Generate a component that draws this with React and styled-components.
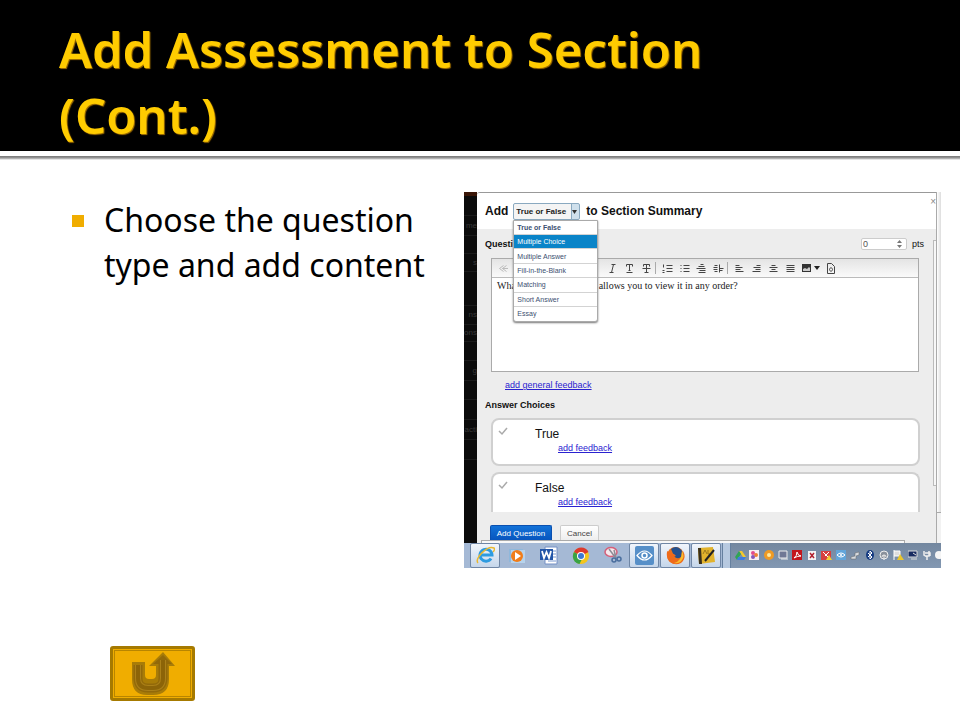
import { useState } from "react";
import styled, { createGlobalStyle, css } from "styled-components";

const GlobalStyle = createGlobalStyle`
  * {
    box-sizing: border-box;
  }
  body {
    margin: 0;
    background: #fff;
    font-family: "Liberation Sans", Arial, sans-serif;
  }
  button,
  input,
  select,
  textarea {
    font-family: inherit;
    margin: 0;
  }
  svg {
    display: block;
    flex: none;
  }
`;

const Slide = styled.div`
  min-height: 100vh;
  display: flex;
  flex-direction: column;
`;

const SlideHeader = styled.header`
  background: #000;
  padding: 16px 59px 3px;
  h1 {
    margin: 0;
    max-width: 700px;
    color: #ffcc00;
    font-family: "Noto Sans", sans-serif;
    font-size: 49px;
    font-weight: 600;
    line-height: 66px;
    text-shadow: 1px 1px 1px #a87400;
  }
`;

const HeaderRule = styled.div`
  height: 4px;
  margin-top: 5px;
  background: linear-gradient(#777, #999 50%, #fff);
`;

const SlideMain = styled.main`
  flex: 1;
  display: grid;
  grid-template-columns: 392fr 477fr;
  align-items: start;
  padding: 32px 19px 24px 72px;
`;

const BulletList = styled.ul`
  margin: 0;
  padding: 5px 20px 0 0;
  list-style: none;
  font-family: "Noto Sans", sans-serif;
  font-size: 32px;
  line-height: 45px;
  li {
    display: grid;
    grid-template-columns: 12px 1fr;
    gap: 20px;
  }
  li::before {
    content: "";
    height: 12px;
    margin-top: 18px;
    background: #f0ad00;
  }
`;

const SlideFooter = styled.footer`
  padding: 0 110px 19px;
`;

const ReturnButton = styled.button`
  display: flex;
  align-items: center;
  justify-content: center;
  width: 85px;
  height: 55px;
  padding: 0;
  background: #f0ad00;
  border: 3px solid #a67a00;
  border-radius: 3px;
  box-shadow: inset 0 0 0 1px #f0ad00, inset 0 0 0 2px #b88500;
`;

const Capture = styled.figure`
  margin: 0;
  min-width: 0;
  overflow: hidden;
`;

const AppWindow = styled.div`
  display: grid;
  grid-template-columns: 13px minmax(0, 1fr) 5px;
`;

const SideNav = styled.nav`
  background: #0b0b0b;
  border-top: 4px solid #3a1607;
  overflow: hidden;
`;

const SideItem = styled.div`
  height: ${({ $height }) => $height}px;
  border-bottom: 1px solid #1b1b1b;
  color: #383838;
  font-size: 8px;
  line-height: ${({ $height }) => $height - 1}px;
  display: flex;
  justify-content: flex-end;
`;

const Dialog = styled.section`
  background: #ededed;
  border-top: 1px solid #999;
  border-radius: 3px 0 0 0;
`;

const DialogHeader = styled.div`
  display: flex;
  align-items: center;
  height: 36px;
  padding-left: 8px;
  background: #fff;
  border-radius: 3px 0 0 0;
  font-size: 12px;
  font-weight: bold;
  color: #111;
`;

const TypePicker = styled.div`
  position: relative;
  width: 67px;
  margin: 0 6px 0 5px;
  select {
    display: block;
    width: 100%;
    height: 17px;
    padding: 0 2px;
    appearance: none;
    background: linear-gradient(90deg, #f4f4f4 57px, #8aa9c0 57px 58px, #cfe0ec 58px);
    border: 1px solid #8aa9c0;
    border-radius: 2px;
    color: #222;
    font-size: 8px;
    font-weight: bold;
  }
  > svg {
    position: absolute;
    right: 3px;
    top: 7px;
    pointer-events: none;
  }
`;

const TypeMenu = styled.ul`
  position: absolute;
  z-index: 2;
  top: 17px;
  left: 0;
  width: 85px;
  height: 102px;
  margin: 0;
  padding: 0;
  display: flex;
  flex-direction: column;
  list-style: none;
  background: #fff;
  border: 1px solid #aaa;
  border-radius: 0 0 3px 3px;
  box-shadow: 0 1px 2px #777;
  li {
    flex: 1;
    display: flex;
    border-bottom: 1px solid #d3d3d3;
  }
  li:last-child {
    border-bottom: 0;
  }
`;

const TypeOption = styled.button`
  flex: 1;
  padding: 0 3px;
  border: 0;
  background: ${({ $active }) => ($active ? "#0a84c8" : "transparent")};
  color: ${({ $active }) => ($active ? "#fff" : "#3c4f70")};
  font-size: 7px;
  font-weight: ${({ $bold }) => ($bold ? "bold" : "normal")};
  text-align: left;
`;

const CloseButton = styled.button`
  align-self: flex-start;
  margin: 4px 0 0 auto;
  padding: 0;
  border: 0;
  background: none;
  color: #888;
  font-size: 10px;
  line-height: 10px;
`;

const DialogBody = styled.div`
  display: grid;
  grid-template-columns: minmax(0, 1fr) 3px;
`;

const QuestionForm = styled.form`
  padding-left: 8px;
`;

const QuestionRow = styled.div`
  display: flex;
  align-items: center;
  height: 29px;
  font-size: 9px;
  color: #111;
  > label {
    font-weight: bold;
  }
`;

const Points = styled.div`
  display: flex;
  align-items: center;
  gap: 5px;
  margin: 0 9px 0 auto;
`;

const PointsField = styled.div`
  display: flex;
  align-items: center;
  width: 46px;
  height: 12px;
  padding-right: 4px;
  background: #fff;
  border: 1px solid #ccc;
  border-radius: 2px;
  input {
    flex: 1;
    min-width: 0;
    padding: 0 1px;
    border: 0;
    background: none;
    color: #555;
    font-size: 9px;
    line-height: 10px;
    appearance: textfield;
  }
  input::-webkit-inner-spin-button {
    display: none;
  }
`;

const Editor = styled.div`
  margin: 0 14px 0 6px;
  border: 1px solid #aaa;
  background: #fff;
  textarea {
    display: block;
    width: 100%;
    height: 93px;
    padding: 2px 5px;
    border: 0;
    resize: none;
    color: #222;
    font-family: "Liberation Serif", "Times New Roman", serif;
    font-size: 10px;
    line-height: 12px;
  }
`;

const Toolbar = styled.div`
  display: flex;
  align-items: center;
  height: 19px;
  padding-left: 2px;
  background: linear-gradient(#e4e4e4, #fafafa);
  border-bottom: 1px solid #bbb;
`;

const Tool = styled.button`
  display: flex;
  align-items: center;
  justify-content: center;
  width: ${({ $wide }) => ($wide ? 23 : 17)}px;
  height: 16px;
  padding: 0;
  border: 0;
  background: none;
  color: ${({ $faded }) => ($faded ? "#bbb" : "#444")};
`;

const ToolGap = styled.span`
  width: 4px;
  height: 12px;
  border-left: 1px solid ${({ $line }) => ($line ? "#aaa" : "transparent")};
`;

const FeedbackLink = styled.a`
  color: #2a22d0;
  font-size: 9px;
  line-height: 12px;
`;

const GeneralFeedback = styled.div`
  display: flex;
  height: 26px;
  padding: 7px 0 0 20px;
`;

const AnswerHeading = styled.h2`
  margin: 0 0 6px;
  color: #111;
  font-size: 9px;
  line-height: 14px;
`;

const AnswerCard = styled.div`
  display: grid;
  grid-template-columns: 37px 1fr;
  height: 48px;
  margin: 0 13px 6px 6px;
  padding: 7px 5px;
  background: #fff;
  border: 2px solid #d0d0d0;
  border-radius: 8px;
  ${({ $clipped }) =>
    $clipped &&
    css`
      height: 40px;
      margin-bottom: 0;
      border-bottom: 0;
      border-radius: 8px 8px 0 0;
    `}
  p {
    margin: 0 0 1px;
    color: #111;
    font-size: 12px;
    line-height: 14px;
  }
  a {
    display: block;
    margin-left: 23px;
  }
`;

const InnerScroll = styled.div`
  height: 246px;
  margin-top: 11px;
  border: solid #bbb;
  border-width: 1px 0 1px 1px;
  background: #f7f7f7;
`;

const OuterScroll = styled.div`
  border-left: 1px solid #aaa;
  background: linear-gradient(90deg, #fff, #ddd);
  display: flex;
  flex-direction: column;
  justify-content: flex-end;
  &::after {
    content: "";
    height: 30px;
    border-top: 1px solid #aaa;
    background: #f2f2f2;
  }
`;

const DialogFooter = styled.div`
  display: flex;
  align-items: flex-end;
  gap: 8px;
  height: 28px;
  padding-left: 13px;
`;

const FooterButton = styled.button`
  width: ${({ $primary }) => ($primary ? 62 : 39)}px;
  height: 15px;
  padding: 0;
  border: 1px solid ${({ $primary }) => ($primary ? "#0a50b0" : "#ccc")};
  border-bottom: 0;
  border-radius: 2px 2px 0 0;
  background: ${({ $primary }) =>
    $primary ? "linear-gradient(#1272d8, #0755be)" : "linear-gradient(#fff, #eee)"};
  color: ${({ $primary }) => ($primary ? "#fff" : "#444")};
  font-size: 8px;
`;

const BottomScroll = styled.div`
  height: 3px;
  margin: 0 31px 0 4px;
  background: #f8f8f8;
  border: 1px solid #aaa;
  border-bottom: 0;
`;

const Taskbar = styled.div`
  display: flex;
  height: 25px;
  padding-left: 6px;
  background: #a5b9d5;
`;

const TaskButton = styled.button`
  display: flex;
  align-items: center;
  justify-content: center;
  width: ${({ $open }) => ($open ? 30 : 32)}px;
  margin-right: ${({ $open }) => ($open ? 1 : 0)}px;
  padding: 0;
  border: 1px solid ${({ $open }) => ($open ? "#6f86a5" : "transparent")};
  border-radius: 2px;
  background: ${({ $open }) => ($open ? "linear-gradient(#f1f5fb, #c5d6ea)" : "none")};
`;

const Tray = styled.div`
  flex: 1;
  display: grid;
  grid-template-columns: 9px 2px repeat(14, minmax(0, 1fr)) 6px;
  align-items: center;
  justify-items: center;
  overflow: hidden;
  background: linear-gradient(#73879f, #8398b2);
`;

const TrayHandle = styled.div`
  grid-column: 1 / 2;
  align-self: stretch;
  justify-self: stretch;
  background: #b7c9e0;
  border: solid #66809f;
  border-width: 0 1px;
`;

const questionTypes = [
  "True or False",
  "Multiple Choice",
  "Multiple Answer",
  "Fill-in-the-Blank",
  "Matching",
  "Short Answer",
  "Essay",
];

const sideItems = [
  { label: "", height: 20 },
  { label: "me", height: 20 },
  { label: "", height: 18 },
  { label: "s", height: 18 },
  { label: "", height: 34 },
  { label: "ns", height: 19 },
  { label: "ons", height: 17 },
  { label: "", height: 19 },
  { label: "g", height: 20 },
  { label: "", height: 19 },
  { label: "", height: 20 },
  { label: "acti", height: 20 },
  { label: "", height: 20 },
];

const strokes = {
  undo: "M6 2 2 5l4 3M9 2 5 5l4 3M5 5h6",
  redo: "M5 2l4 3-4 3M2 2l4 3-4 3",
  cut: "M2 1l6 8M8 1 2 9",
  copy: "M2 1h5v6H2zM4 7v2h5V3H7",
  paste: "M2 2h6v7H2zM4 1h2v2H4z",
  bold: "M3 1v8h3a2 2 0 0 0 0-4H3h2a2 2 0 0 0 0-4z",
  italic: "M4 1h4M2 9h4M6 1 4 9",
  type: "M2 3V1h6v2M5 1v6M4 7h2M2 9h6",
  strike: "M2 3V1h6v2M5 1v8M3 9h4M1 5h8",
  ordered: "M4 2h6M4 5h6M4 8h6M1 1v3M0 7h2M0 9h2",
  bullets: "M4 2h6M4 5h6M4 8h6M1 2h1M1 5h1M1 8h1",
  outdent: "M4 1h3M2 3h6M0 5h9M3 7h6M2 9h7",
  indent: "M1 2h3M0 4h4M0 6h4M1 8h3M6 1v8M6 5h4M6 7h3",
  left: "M1 2h4M1 4h7M1 6h5M1 8h8",
  right: "M5 2h4M2 4h7M4 6h5M1 8h8",
  center: "M3 2h4M1 4h8M3 6h4M1 8h8",
  justify: "M1 2h8M1 4h8M1 6h8M1 8h8",
  embed: "M2 0h4l3 3v7H2zM5 4 4 6l1 2M6 4l1 2-1 2",
};

function ToolIcon({ name }) {
  return (
    <svg width="11" height="11" viewBox="-0.5 -0.5 11 11">
      <path d={strokes[name]} fill="none" stroke="currentColor" strokeWidth="1" />
    </svg>
  );
}

function Caret() {
  return (
    <svg width="5" height="4" viewBox="0 0 5 4">
      <path d="M0 0h5L2.500 4z" fill="#333" />
    </svg>
  );
}

function ToolButtons({ names, faded }) {
  return names.map((name) => (
    <Tool key={name} type="button" aria-label={name} $faded={faded}>
      <ToolIcon name={name} />
    </Tool>
  ));
}

function EditorToolbar() {
  return (
    <Toolbar>
      <ToolButtons names={["undo", "redo"]} faded />
      <ToolGap />
      <ToolButtons names={["cut", "copy", "paste", "bold"]} />
      <ToolGap />
      <ToolButtons names={["italic", "type", "strike"]} />
      <ToolGap $line />
      <ToolButtons names={["ordered", "bullets", "outdent", "indent"]} />
      <ToolGap $line />
      <ToolButtons names={["left", "right", "center", "justify"]} />
      <Tool type="button" aria-label="image" $wide>
        <svg width="18" height="10" viewBox="0 0 18 10">
          <path d="M0 1h9v8H0z" fill="#333" />
          <path d="M1 8V6l2-1 2 1 2-2 1 1v3z" fill="#ccc" />
          <path d="M12 3h6l-3 4z" fill="#222" />
        </svg>
      </Tool>
      <ToolButtons names={["embed"]} />
    </Toolbar>
  );
}

function Answer({ text, clipped }) {
  return (
    <AnswerCard $clipped={clipped}>
      <svg width="11" height="9" viewBox="0 0 11 9">
        <path d="M1 4l3 3 5-6" fill="none" stroke="#aaa" strokeWidth="1.500" />
      </svg>
      <div>
        <p>{text}</p>
        <FeedbackLink href="#feedback">add feedback</FeedbackLink>
      </div>
    </AnswerCard>
  );
}

function AssessmentDialog() {
  const [type, setType] = useState("True or False");
  const [points, setPoints] = useState(0);

  return (
    <Dialog>
      <DialogHeader>
        <label htmlFor="question-type">Add</label>
        <TypePicker>
          <select
            id="question-type"
            value={type}
            onChange={(event) => setType(event.target.value)}
          >
            {questionTypes.map((name) => (
              <option key={name}>{name}</option>
            ))}
          </select>
          <Caret />
          <TypeMenu>
            {questionTypes.map((name, index) => (
              <li key={name}>
                <TypeOption
                  type="button"
                  $bold={index === 0}
                  $active={name === "Multiple Choice"}
                  onClick={() => setType(name)}
                >
                  {name}
                </TypeOption>
              </li>
            ))}
          </TypeMenu>
        </TypePicker>
        <span>to Section Summary</span>
        <CloseButton aria-label="Close">×</CloseButton>
      </DialogHeader>
      <DialogBody>
        <QuestionForm>
          <QuestionRow>
            <label htmlFor="question">Question</label>
            <Points>
              <PointsField>
                <input
                  id="points"
                  type="number"
                  value={points}
                  onChange={(event) => setPoints(event.target.value)}
                />
                <svg width="5" height="8" viewBox="0 0 5 8">
                  <path d="M0 3h5L2.500 0zM0 5h5L2.500 8z" fill="#777" />
                </svg>
              </PointsField>
              <label htmlFor="points">pts</label>
            </Points>
          </QuestionRow>
          <Editor>
            <EditorToolbar />
            <textarea
              id="question"
              defaultValue="What type of assessment allows you to view it in any order?"
            />
          </Editor>
          <GeneralFeedback>
            <FeedbackLink href="#general">add general feedback</FeedbackLink>
          </GeneralFeedback>
          <AnswerHeading>Answer Choices</AnswerHeading>
          <Answer text="True" />
          <Answer text="False" clipped />
        </QuestionForm>
        <InnerScroll />
      </DialogBody>
      <DialogFooter>
        <FooterButton $primary>Add Question</FooterButton>
        <FooterButton>Cancel</FooterButton>
      </DialogFooter>
      <BottomScroll />
    </Dialog>
  );
}

const taskIcons = [
  {
    name: "Internet Explorer",
    open: true,
    art: (
      <>
        <path d="M15 12.500A6 6 0 1 1 16 9H5.500" fill="none" stroke="#2d9be0" strokeWidth="3" />
        <path d="M2 17C-2 13 11-1 18 2c1 1 0 3-1 4" fill="none" stroke="#e9b830" strokeWidth="1.500" />
      </>
    ),
  },
  {
    name: "Media Player",
    art: (
      <>
        <path d="M1 3h14v13H1z" fill="#8fb8dc" />
        <path d="M3 4h14v13H3z" fill="#b6d3ec" />
        <circle cx="9" cy="10" r="6" fill="#f07d1a" />
        <path d="M7 6l6 4-6 4z" fill="#fff" />
      </>
    ),
  },
  {
    name: "Word",
    art: (
      <>
        <path d="M5 1h12v17H5z" fill="#fff" stroke="#7590c5" />
        <path d="M12 5h4M12 8h4M12 11h4M8 15h8" stroke="#7a9ad0" />
        <path d="M0 3h13v11H0z" fill="#2356a8" />
        <path d="M2 5l2 7 2.500-6L9 12l2-7" fill="none" stroke="#fff" strokeWidth="1.800" />
      </>
    ),
  },
  {
    name: "Chrome",
    art: (
      <>
        <circle cx="9" cy="10" r="8" fill="#f4c51c" />
        <path d="M9 10 2 6a8 8 0 0 1 14.500 0z" fill="#dd3a2c" />
        <path d="M9 10 2 6a8 8 0 0 0 5.500 12L10 13z" fill="#39a344" />
        <circle cx="9" cy="10" r="4" fill="#fff" />
        <circle cx="9" cy="10" r="3" fill="#3c78d2" />
      </>
    ),
  },
  {
    name: "Snipping Tool",
    art: (
      <>
        <ellipse cx="7" cy="6" rx="6" ry="4.500" fill="#f6e9ec" stroke="#d4607a" strokeWidth="1.500" />
        <path d="M5 3l6 8M10 4l2 8" stroke="#8c8c97" strokeWidth="1.500" />
        <circle cx="10" cy="14" r="2" fill="none" stroke="#496d9d" strokeWidth="1.500" />
        <circle cx="15" cy="13" r="2" fill="none" stroke="#496d9d" strokeWidth="1.500" />
      </>
    ),
  },
  {
    name: "Viewer",
    open: true,
    art: (
      <>
        <rect width="19" height="19" rx="2" fill="#568fc8" />
        <path d="M2 9.500q7.500-9 15 0q-7.500 9-15 0z" fill="none" stroke="#fff" strokeWidth="1.200" />
        <circle cx="9.500" cy="9.500" r="2.500" fill="none" stroke="#fff" strokeWidth="1.500" />
      </>
    ),
  },
  {
    name: "Firefox",
    open: true,
    art: (
      <>
        <circle cx="9.500" cy="9.500" r="8.500" fill="#e8711c" />
        <path d="M5 3q6-5 11 2l-1 6q-4 3-7-1z" fill="#24508c" />
        <path d="M1 5l3 2 4 1 2 2-3 1q2 4 6 2 5-2 4-8 4 7-2 12-6 3-11-1-4-4-3-10z" fill="#ef6a1a" />
        <path d="M16 5q3 5 0 9-3 4-8 3 8-2 8-12z" fill="#f8bd2c" />
      </>
    ),
  },
  {
    name: "Notes",
    open: true,
    art: (
      <>
        <path d="M1 2l15-1 2 15-16 2z" fill="#e2b32d" />
        <path d="M1 2h3l1 16H2z" fill="#3a301a" />
        <path d="M6 8l2-4 2 4M11 4v4h2" fill="none" stroke="#9b791d" />
        <path d="M17 4 8 15" stroke="#222" strokeWidth="2" />
      </>
    ),
  },
];

const trayIcons = [
  <>
    <path d="M4 1h3l4 6H8z" fill="#f5c92d" />
    <path d="M4 1 0 7l2 3 4-6z" fill="#31a455" />
    <path d="M3 7h8l-2 3H2z" fill="#3f7de0" />
  </>,
  <>
    <path d="M0 0h10v10H0z" fill="#f7eef1" />
    <circle cx="4" cy="3" r="2" fill="#e14b8b" />
    <circle cx="7" cy="5" r="2" fill="#ee8033" />
    <circle cx="4" cy="7" r="2" fill="#8556b8" />
  </>,
  <>
    <circle cx="5" cy="5" r="5" fill="#ef9a24" />
    <circle cx="5" cy="5" r="2" fill="#ffe9a0" />
  </>,
  <path d="M1 1h8v7H1zM3 9h7" fill="#707895" stroke="#eee" />,
  <>
    <path d="M0 0h10v10H0z" fill="#c3161c" />
    <path d="M2 8q3-2 3-6 1 4 4 4-4 0-7 2" fill="none" stroke="#fff" />
  </>,
  <>
    <path d="M1 1h8v9H1z" fill="#f4f4f4" />
    <path d="M3 3l4 5M7 3 3 8" stroke="#b2202d" strokeWidth="1.500" />
  </>,
  <>
    <path d="M0 1h10v9H0z" fill="#d64040" />
    <path d="M2 2l6 6M8 2 4 6" stroke="#fff" />
    <path d="M5 10l3-5 3 5z" fill="#f2ce38" />
  </>,
  <>
    <path d="M0 0h10v10H0z" fill="#62a5da" />
    <path d="M1 5q4-4 8 0-4 4-8 0z" fill="none" stroke="#fff" />
    <circle cx="5" cy="5" r="1" fill="#fff" />
  </>,
  <path d="M1 9h5V6l3-1V2L5 3v3L1 7z" fill="#d7dbe0" stroke="#666" strokeWidth=".5" />,
  <>
    <ellipse cx="5" cy="5" rx="4" ry="5" fill="#153b82" />
    <path d="M3 3l4 4-2 2V1l2 2-4 4" fill="none" stroke="#fff" />
  </>,
  <>
    <circle cx="5" cy="5" r="4" fill="#8b929c" stroke="#eee" />
    <path d="M3 7a2 2 0 1 1 4 0M5 5v5" fill="none" stroke="#eee" />
  </>,
  <>
    <path d="M1 0v10M1 1h6v5H1" fill="#ddd" stroke="#fff" />
    <path d="M4 10l3-6 4 6z" fill="#eac62b" />
  </>,
  <>
    <path d="M0 1h9v6H0z" fill="#172b61" stroke="#ddd" />
    <path d="M3 9h6M5 3l3 2" stroke="#ddd" />
  </>,
  <path d="M2 1v4l3 2v3M7 1v5H4M3 3h5v3" fill="none" stroke="#eee" strokeWidth="1.500" />,
  <circle cx="6" cy="5" r="4" fill="#f5f5f5" />,
];

function WindowsTaskbar() {
  return (
    <Taskbar>
      {taskIcons.map(({ name, open, art }) => (
        <TaskButton key={name} aria-label={name} $open={open}>
          <svg width="19" height="19" viewBox="0 0 19 19">
            {art}
          </svg>
        </TaskButton>
      ))}
      <Tray>
        <TrayHandle />
        <span />
        {trayIcons.map((art, index) => (
          <svg key={index} width="11" height="11" viewBox="0 0 11 11">
            {art}
          </svg>
        ))}
      </Tray>
    </Taskbar>
  );
}

function ReturnArrow() {
  const bend = "M7 13v13q0 10 10 10h5q10 0 10-10V8";
  return (
    <svg width="44" height="43" viewBox="0 0 44 43">
      <path
        d="M1 10h13v13q0 4 4 4h3q4 0 4-4V14h-7L32 0l12 14h-6v13q0 16-16 16h-6Q1 43 1 27z"
        fill="#a87c08"
      />
      <path d="M22 12 32 3l9 9z" fill="#92690a" />
      <path d={bend} fill="none" stroke="#92690a" strokeWidth="9" />
      <path d={bend} fill="none" stroke="#ab8018" strokeWidth="6" />
      <path d={bend} fill="none" stroke="#8c6408" strokeWidth="4" />
    </svg>
  );
}

export default function App() {
  return (
    <Slide>
      <GlobalStyle />
      <SlideHeader>
        <h1>Add Assessment to Section (Cont.)</h1>
      </SlideHeader>
      <HeaderRule />
      <SlideMain>
        <BulletList>
          <li>Choose the question type and add content</li>
        </BulletList>
        <Capture>
          <AppWindow>
            <SideNav>
              {sideItems.map(({ label, height }, index) => (
                <SideItem key={index} $height={height}>
                  {label}
                </SideItem>
              ))}
            </SideNav>
            <AssessmentDialog />
            <OuterScroll />
          </AppWindow>
          <WindowsTaskbar />
        </Capture>
      </SlideMain>
      <SlideFooter>
        <ReturnButton aria-label="Return">
          <ReturnArrow />
        </ReturnButton>
      </SlideFooter>
    </Slide>
  );
}
